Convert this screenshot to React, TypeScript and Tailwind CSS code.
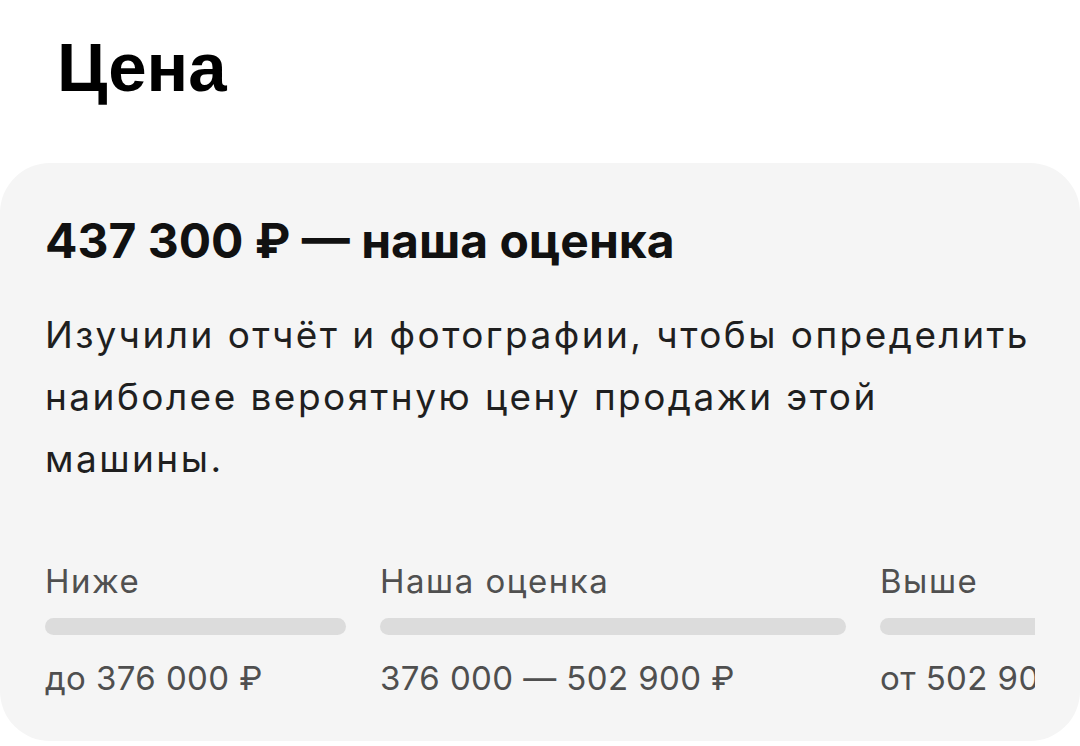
const ranges = [
  { label: "Ниже", value: "до 376 000 ₽", width: "w-[301px]" },
  { label: "Наша оценка", value: "376 000 — 502 900 ₽", width: "w-[466px]" },
  { label: "Выше", value: "от 502 900 ₽", width: "w-[301px]" },
];

export default function App() {
  return (
    <div
      className="h-[746px] w-[1080px] overflow-hidden bg-white text-[#1a1a1a]"
      style={{ fontFamily: "Inter, 'Noto Sans', sans-serif" }}
    >
      {/* HEADER */}
      <h1
        className="pl-[57px] pt-[30px] text-[69px] font-bold leading-[76px] text-black"
        style={{ fontFamily: "'Liberation Sans', Arial, sans-serif" }}
      >
        Цена
      </h1>

      {/* ESTIMATE CARD */}
      <section className="mt-[57px] h-[578px] w-[1080px] rounded-[50px] bg-[#f5f5f5] px-[45px] pt-[50px]">
        <h2 className="text-[48px] font-bold leading-[56px] text-[#111]">
          437 300 ₽ — наша оценка
        </h2>

        <p className="mt-[35px] text-[37px] leading-[62px] tracking-[2.45px] text-[#1f1f1f]">
          Изучили отчёт и фотографии, чтобы определить наиболее вероятную цену
          продажи этой машины.
        </p>

        {/* price ranges, the last column runs past the card edge */}
        <div className="mt-[71px] flex gap-[34px] overflow-hidden">
          {ranges.map((r) => (
            <div key={r.label} className={`${r.width} shrink-0`}>
              <div className="text-[33px] leading-[40px] tracking-[1.5px] text-[#505050]">
                {r.label}
              </div>
              <div className="mt-[17px] h-[17px] rounded-full bg-[#dcdcdc]" />
              <div className="mt-[23px] whitespace-nowrap text-[33px] leading-[40px] tracking-[0.4px] text-[#4f4f4f]">
                {r.value}
              </div>
            </div>
          ))}
        </div>
      </section>
    </div>
  );
}
